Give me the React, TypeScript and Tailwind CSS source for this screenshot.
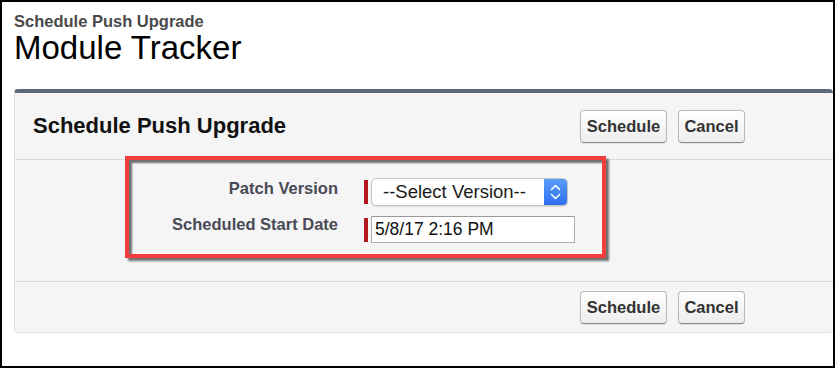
import React from 'react';

const Btn = ({ label, width }: { label: string; width: string }) => (
  <button
    className={`${width} h-[33px] rounded-[4px] border border-[#b8b8b8] border-b-[#8a8a8a] bg-gradient-to-b from-white to-[#ededed] text-[16.5px] font-bold leading-none text-[#333] shadow-[0_1px_1px_rgba(0,0,0,0.08)]`}
  >
    {label}
  </button>
);

const ButtonBar = () => (
  <div className="flex items-center gap-[11px] pr-[88px]">
    <Btn label="Schedule" width="w-[87px]" />
    <Btn label="Cancel" width="w-[67px]" />
  </div>
);

const App = () => {
  return (
    <div className="h-[368px] w-[835px] overflow-hidden border-2 border-black bg-white font-['Liberation_Sans',Arial,sans-serif]">
      { /* Page header */ }
      <div className="pl-3 pt-[10px]">
        <div className="text-[16.5px] font-bold leading-[19px] text-[#4a4a4a]">Schedule Push Upgrade</div>
        <h1 className="text-[33px] leading-[34px] text-black">Module Tracker</h1>
      </div>

      { /* Page block */ }
      <div className="ml-3 mt-[24px] rounded-[4px] border border-r-0 border-t-[4px] border-[#e0e0e0] border-t-[#5e6980] bg-[#f5f5f5]">
        <div className="flex h-[67px] items-center justify-between border-b border-[#dadada] pl-[18px]">
          <h2 className="text-[22px] font-bold leading-[26px] text-[#111]">Schedule Push Upgrade</h2>
          <ButtonBar />
        </div>

        <div className="relative h-[121px] pt-[18px]">
          <div className="flex h-[28px]">
            <label className="mt-[1px] w-[323px] text-right text-[16.5px] font-bold leading-[19px] text-[#4a4a56]">
              Patch Version
            </label>
            <span className="ml-[26px] h-[24px] w-[4px] self-center bg-[#b3161d]" />
            <div className="ml-[3px] flex h-[28px] w-[197px] overflow-hidden rounded-[5px] border border-[#c6c6c6] bg-white shadow-[0_1px_1px_rgba(0,0,0,0.1)]">
              <span className="flex-1 pl-[11px] text-[18.5px] leading-[26px] text-[#1a1a1a]">--Select Version--</span>
              <span className="flex w-[23px] items-center justify-center bg-gradient-to-b from-[#5a9cf8] to-[#2d6ff0]">
                <svg width="23" height="26" viewBox="0 0 23 26" fill="none" stroke="white" strokeWidth="1.6" strokeLinecap="round" strokeLinejoin="round">
                  <path d="M7.5 10.5 L11.5 6.5 L15.5 10.5" />
                  <path d="M7.5 15.5 L11.5 19.5 L15.5 15.5" />
                </svg>
              </span>
            </div>
          </div>

          <div className="mt-[10px] flex h-[27px]">
            <label className="-mt-[1px] w-[323px] text-right text-[16.5px] font-bold leading-[19px] text-[#4a4a56]">
              Scheduled Start Date
            </label>
            <span className="ml-[26px] h-[24px] w-[4px] self-center bg-[#b3161d]" />
            <div className="ml-[3px] flex h-[27px] w-[204px] items-center border border-[#b0b0b0] border-t-[#9a9a9a] bg-white pl-[3px] text-[17.5px] leading-none text-[#111]">
              5/8/17 2:16 PM
            </div>
          </div>

          { /* Callout annotation */ }
          <div className="pointer-events-none absolute left-[110px] top-[-4px] h-[102px] w-[481px] border-[4px] border-[#f23d3d] shadow-[3px_3px_2px_rgba(0,0,0,0.55),inset_3px_3px_2px_rgba(0,0,0,0.55)]" />
        </div>

        <div className="flex h-[51px] items-center justify-end border-t border-[#dadada]">
          <ButtonBar />
        </div>
      </div>
    </div>
  );
};

export default App;
